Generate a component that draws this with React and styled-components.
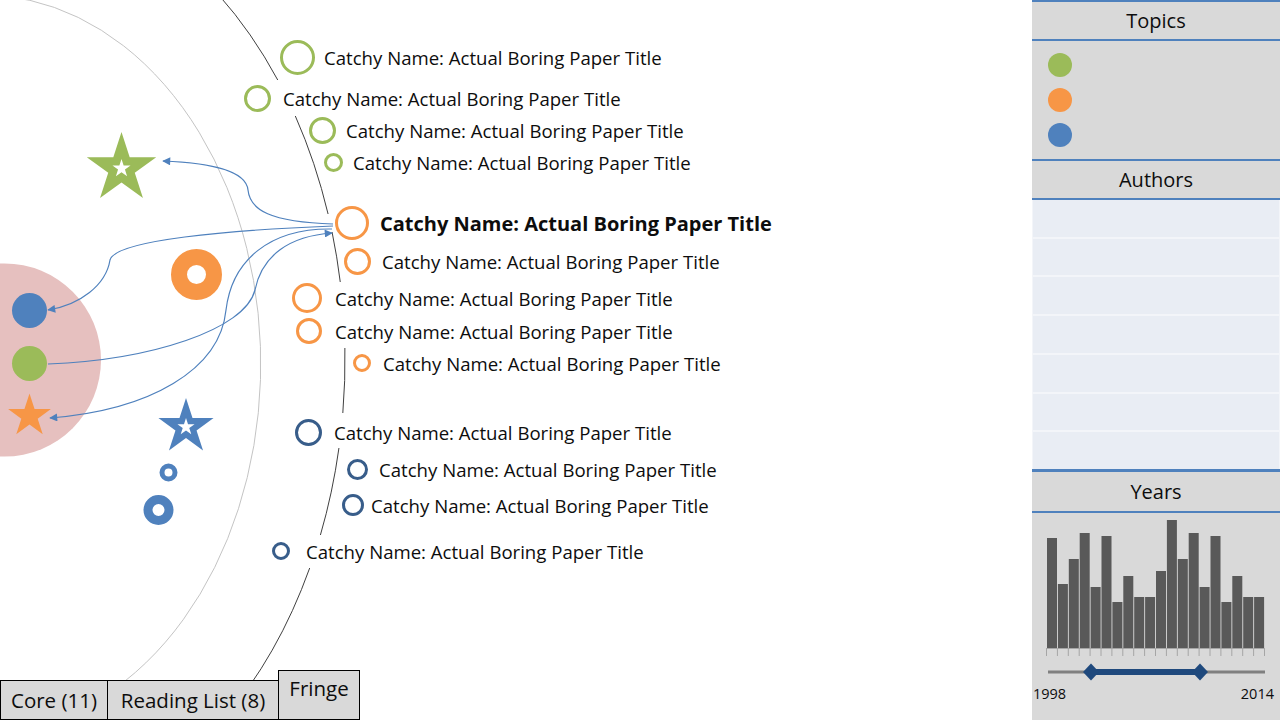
import React from 'react';
import styled, { createGlobalStyle } from 'styled-components';

const GREEN = '#9bbb59';
const ORANGE = '#f79646';
const BLUE = '#4f81bd';
const NAVY = '#385d8a';

const GlobalStyle = createGlobalStyle`
  html, body {
    margin: 0;
    padding: 0;
    background: #fff;
  }
`;

const Page = styled.div`
  display: flex;
  width: 1280px;
  height: 720px;
  overflow: hidden;
  font-family: "Open Sans", Lato, sans-serif;
  color: #0d0d0d;
  background: #fff;
`;

const Canvas = styled.main`
  position: relative;
  flex: 1;
  height: 720px;
  overflow: hidden;
  display: flex;
  flex-direction: column;
  justify-content: flex-end;
`;

const Drawing = styled.svg`
  position: absolute;
  left: 0;
  top: 0;
  width: 1032px;
  height: 720px;
`;

const PaperRow = styled.div`
  position: absolute;
  left: ${(p) => p.$x}px;
  top: ${(p) => p.$y}px;
  height: 36px;
  display: flex;
  align-items: center;
  white-space: nowrap;
  z-index: 1;
`;

const Ring = styled.span`
  flex: none;
  box-sizing: border-box;
  width: ${(p) => p.$d}px;
  height: ${(p) => p.$d}px;
  border: 3px solid ${(p) => p.$color};
  border-radius: 50%;
  margin-right: ${(p) => p.$gap}px;
`;

const PaperTitle = styled.span`
  font-size: ${(p) => (p.$bold ? '20px' : '18.6px')};
  font-weight: ${(p) => (p.$bold ? 700 : 400)};
`;

const TabBar = styled.nav`
  position: relative;
  z-index: 2;
  display: flex;
  align-items: flex-end;
`;

const Tab = styled.div`
  box-sizing: border-box;
  width: ${(p) => p.$w}px;
  height: ${(p) => (p.$raised ? 50 : 40)}px;
  border: 1px solid #000;
  background: #d9d9d9;
  font-size: 20.5px;
  display: flex;
  justify-content: center;
  align-items: ${(p) => (p.$raised ? 'flex-start' : 'center')};
  padding-top: ${(p) => (p.$raised ? 3 : 0)}px;
  & + & {
    margin-left: -1px;
  }
`;

const Sidebar = styled.aside`
  width: 248px;
  flex: none;
  background: #d9d9d9;
  border-top: 2px solid ${BLUE};
  display: flex;
  flex-direction: column;
`;

const PanelHeader = styled.div`
  height: ${(p) => p.$h || 37}px;
  flex: none;
  display: flex;
  align-items: center;
  justify-content: center;
  font-size: 20px;
  border-bottom: 2px solid ${BLUE};
`;

const TopicList = styled.div`
  height: 106px;
  flex: none;
  padding: 12px 0 0 16px;
  display: flex;
  flex-direction: column;
  gap: 11px;
  border-bottom: 2px solid ${BLUE};
`;

const Dot = styled.span`
  width: 24px;
  height: 24px;
  border-radius: 50%;
  background: ${(p) => p.$color};
`;

const AuthorList = styled.div`
  height: 269px;
  flex: none;
  padding: 0 1px;
  display: flex;
  flex-direction: column;
  gap: 2px;
  background: #f3f5f9;
  border-bottom: 3px solid ${BLUE};
`;

const AuthorRow = styled.div`
  flex: 1;
  background: #e9edf4;
`;

const YearChart = styled.svg`
  display: block;
  width: 248px;
  height: 172px;
`;

const YearLabels = styled.div`
  display: flex;
  justify-content: space-between;
  padding: 0 6px 0 1px;
  font-size: 14.5px;
  line-height: 18px;
`;

const papers = [
  { cx: 297, cy: 57, d: 35, color: GREEN, tx: 324 },
  { cx: 257.5, cy: 98, d: 27, color: GREEN, tx: 283 },
  { cx: 322.5, cy: 130, d: 27, color: GREEN, tx: 346 },
  { cx: 333.5, cy: 162, d: 19, color: GREEN, tx: 353 },
  { cx: 352, cy: 223, d: 34, color: ORANGE, tx: 380, bold: true },
  { cx: 357, cy: 261, d: 27, color: ORANGE, tx: 382 },
  { cx: 307, cy: 298, d: 30, color: ORANGE, tx: 335 },
  { cx: 309, cy: 331, d: 26, color: ORANGE, tx: 335 },
  { cx: 362, cy: 363, d: 18, color: ORANGE, tx: 383 },
  { cx: 308.5, cy: 432, d: 27, color: NAVY, tx: 334 },
  { cx: 357.5, cy: 469, d: 21, color: NAVY, tx: 379 },
  { cx: 353, cy: 505, d: 22, color: NAVY, tx: 371 },
  { cx: 281, cy: 551, d: 18, color: NAVY, tx: 306 },
];

const bars = [110, 64, 89, 115, 61, 112, 46, 72, 51, 51, 77, 128, 89, 115, 61, 112, 46, 72, 51, 51];

function arcPath(cx, cy, rx, ry, y1, y2) {
  const x = (y) => cx + rx * Math.sqrt(Math.max(0, 1 - ((y - cy) / ry) ** 2));
  return `M ${x(y1)} ${y1} A ${rx} ${ry} 0 0 1 ${x(y2)} ${y2}`;
}

function starPoints(cx, cy, r, ratio = 0.382) {
  const pts = [];
  for (let i = 0; i < 10; i++) {
    const a = ((-90 + i * 36) * Math.PI) / 180;
    const rr = i % 2 === 0 ? r : r * ratio;
    pts.push(`${cx + rr * Math.cos(a)},${cy + rr * Math.sin(a)}`);
  }
  return pts.join(' ');
}

const darkSegments = [
  [-5, 80],
  [116, 214],
  [232, 282],
  [348, 413],
  [448, 535],
  [568, 720],
];

const MapDrawing = () => (
  <Drawing viewBox="0 0 1032 720">
    <defs>
      <marker
        id="head"
        viewBox="0 0 10 10"
        refX="9"
        refY="5"
        markerWidth="9"
        markerHeight="8"
        markerUnits="userSpaceOnUse"
        orient="auto"
      >
        <path d="M0,0 L10,5 L0,10 z" fill={BLUE} />
      </marker>
    </defs>

    <path d={arcPath(-20, 365, 278, 369, -5, 720)} fill="none" stroke="#c4c4c4" strokeWidth="1" />
    {darkSegments.map(([a, b]) => (
      <path key={a} d={arcPath(0, 360, 345, 472, a, b)} fill="none" stroke="#404040" strokeWidth="1" />
    ))}

    <circle cx="4.5" cy="360" r="96.5" fill="#e6c0bf" />
    <circle cx="29.5" cy="310.5" r="17.5" fill={BLUE} />
    <circle cx="29.5" cy="363.5" r="17.5" fill={GREEN} />
    <polygon points={starPoints(29.5, 416, 22.5)} fill={ORANGE} />

    <polygon points={starPoints(121.5, 168.5, 36.5)} fill={GREEN} />
    <polygon points={starPoints(121.5, 168.5, 9.5)} fill="#fff" />

    <circle cx="196.5" cy="274.5" r="17.5" fill="none" stroke={ORANGE} strokeWidth="16" />

    <polygon points={starPoints(186, 427, 29)} fill={BLUE} />
    <polygon points={starPoints(186, 427, 9)} fill="#fff" />

    <circle cx="168.5" cy="472.5" r="6.5" fill="none" stroke={BLUE} strokeWidth="5" />
    <circle cx="158.5" cy="510" r="10.5" fill="none" stroke={BLUE} strokeWidth="9" />

    <g fill="none" stroke={BLUE} strokeWidth="1.2" markerEnd="url(#head)">
      <path d="M 333 224 C 270 222, 250 210, 248 190 C 246 170, 210 163, 163 161" />
      <path d="M 333 226 C 230 230, 115 240, 110 260 C 106 285, 80 305, 48 310" />
      <path d="M 48 364 C 150 360, 245 330, 255 290 C 262 255, 290 236, 332 233" />
      <path d="M 332 229 C 270 228, 232 260, 226 310 C 220 370, 150 410, 50 418" />
    </g>
  </Drawing>
);

const YearHistogram = () => {
  const step = 10.9;
  const x0 = 15;
  const base = 135;
  return (
    <YearChart viewBox="0 0 248 172">
      {bars.map((h, i) => (
        <rect key={i} x={x0 + i * step} y={base - h} width="10" height={h} fill="#595959" />
      ))}
      <line x1={x0 - 0.5} y1={base + 0.5} x2={x0 + 20 * step - 0.5} y2={base + 0.5} stroke="#a6a6a6" />
      {Array.from({ length: 21 }, (_, i) => (
        <line
          key={i}
          x1={x0 + i * step - 0.5}
          y1={base}
          x2={x0 + i * step - 0.5}
          y2={base + 8}
          stroke="#a6a6a6"
        />
      ))}
      <line x1="16" y1="159" x2="233" y2="159" stroke="#808080" strokeWidth="3" />
      <line x1="59" y1="159" x2="168" y2="159" stroke="#1f497d" strokeWidth="6" />
      <polygon points="59,150.5 67,159 59,167.5 51,159" fill="#1f497d" />
      <polygon points="168,150.5 176,159 168,167.5 160,159" fill="#1f497d" />
    </YearChart>
  );
};

const App = () => (
  <Page>
    <GlobalStyle />
    <Canvas>
      <MapDrawing />
      {papers.map((p, i) => (
        <PaperRow key={i} $x={p.cx - p.d / 2} $y={p.cy - 18}>
          <Ring $d={p.d} $color={p.color} $gap={p.tx - (p.cx + p.d / 2)} />
          <PaperTitle $bold={p.bold}>Catchy Name: Actual Boring Paper Title</PaperTitle>
        </PaperRow>
      ))}
      <TabBar>
        <Tab $w={108}>Core (11)</Tab>
        <Tab $w={172}>Reading List (8)</Tab>
        <Tab $w={82} $raised>
          Fringe
        </Tab>
      </TabBar>
    </Canvas>

    <Sidebar>
      <PanelHeader>Topics</PanelHeader>
      <TopicList>
        <Dot $color={GREEN} />
        <Dot $color={ORANGE} />
        <Dot $color={BLUE} />
      </TopicList>
      <PanelHeader>Authors</PanelHeader>
      <AuthorList>
        {Array.from({ length: 7 }, (_, i) => (
          <AuthorRow key={i} />
        ))}
      </AuthorList>
      <PanelHeader $h={39}>Years</PanelHeader>
      <YearHistogram />
      <YearLabels>
        <span>1998</span>
        <span>2014</span>
      </YearLabels>
    </Sidebar>
  </Page>
);

export default App;
